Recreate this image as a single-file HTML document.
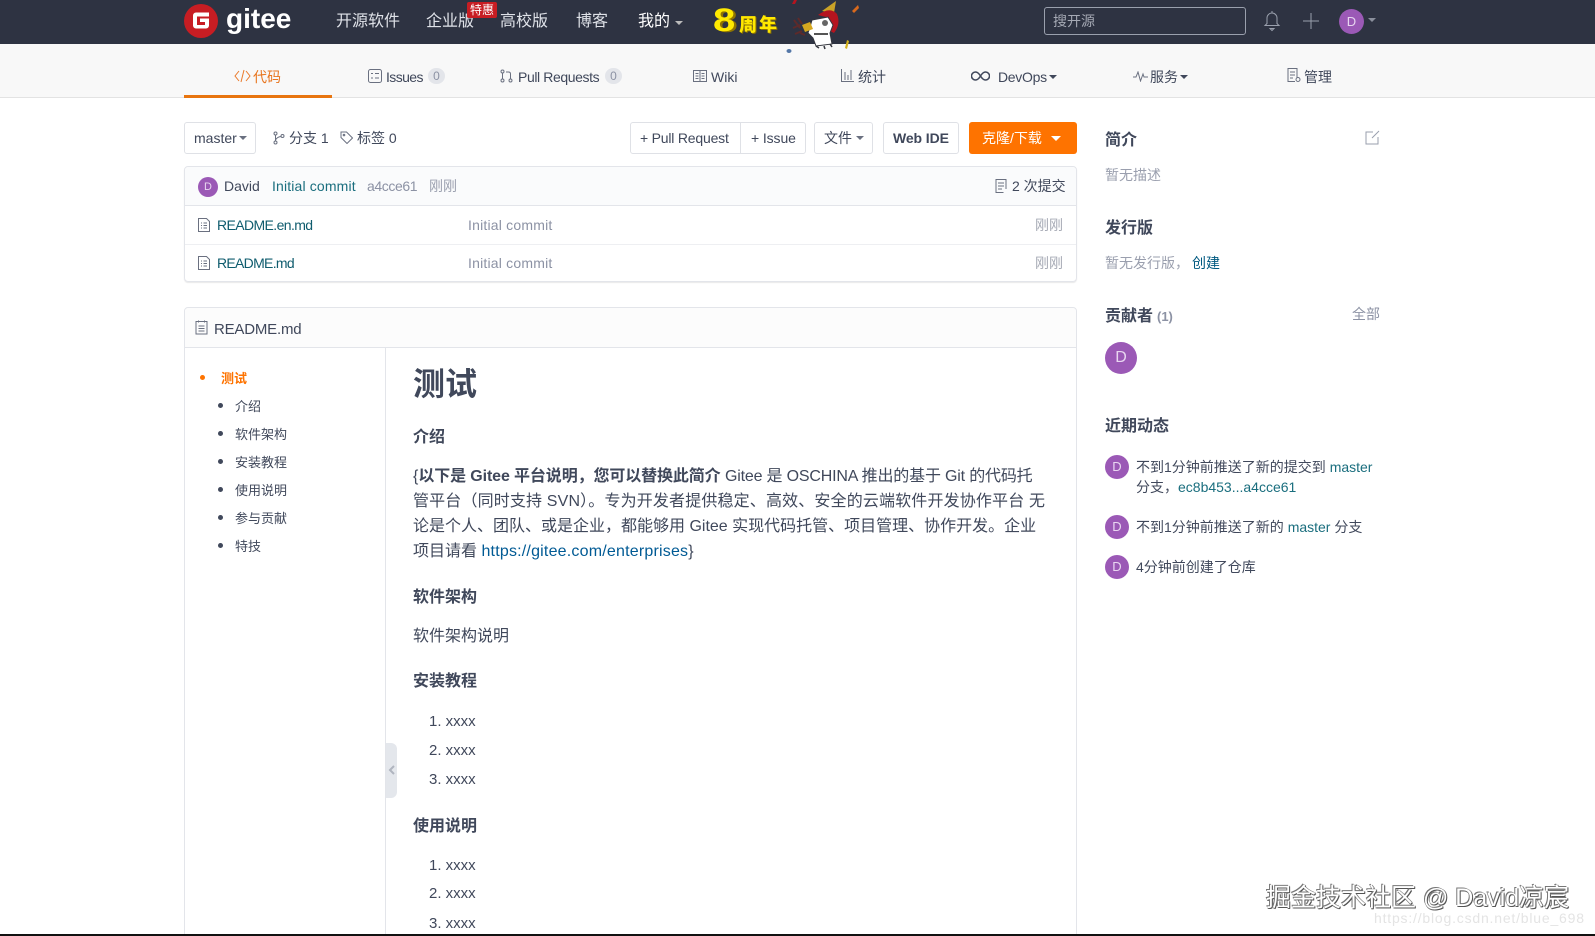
<!DOCTYPE html>
<html lang="zh"><head><meta charset="utf-8"><title>Gitee</title>
<style>
html,body{margin:0;padding:0;width:1595px;height:936px;overflow:hidden;background:#fff}
body{position:relative;font-family:"Liberation Sans","Noto Sans CJK SC",sans-serif;font-size:14px;color:#40485b}
.t,.b,svg{position:absolute}
.t{white-space:nowrap;height:20px;line-height:20px}
.b{box-sizing:border-box}
.g{color:#8c92a4}.l{color:#005980}.s{font-size:13px}.m{font-size:14px}
.btn{border:1px solid #dfe1e6;border-radius:3px;background:#fff}
.car{position:absolute;width:0;height:0;border-left:4px solid transparent;border-right:4px solid transparent;border-top:4px solid #6a7080}
svg{fill:none;stroke:#6a7080;stroke-width:1}
.nav{color:#dfe2e8;font-size:16px}
.ol{color:#40485b;font-size:15px}
.p{color:#40485b;font-size:16px}
h1,h2{margin:0;font-weight:bold}
.av{position:absolute;border-radius:50%;background:#9b59b6;color:#e8d6f0;text-align:center}
</style></head><body>

<!-- top nav -->
<div class="b" style="left:0;top:0;width:1595px;height:44px;background:#2e3342"></div>
<div class="b" style="left:0;top:44px;width:1595px;height:54px;background:#f8f8f8;border-bottom:1px solid #e3e3e3"></div>
<div class="b" style="left:184px;top:95px;width:148px;height:3px;background:#e8750f"></div>

<svg style="left:183px;top:3px;stroke:none" width="36" height="36" viewBox="0 0 36 36"><circle cx="18" cy="18" r="17" fill="#c71d23"/><path d="M10 12.500a3 3 0 0 1 3-3h13v4H14v8.500h8v-3h-5v-3.500h9v7a3 3 0 0 1-3 3H13a3 3 0 0 1-3-3z" fill="#fff"/></svg>
<div class="t" style="left:226px;top:5px;height:28px;line-height:28px;font-size:28px;font-weight:bold;color:#fff">gitee</div>

<div class="t nav" style="left:336px;top:12px">开源软件</div>
<div class="t nav" style="left:426px;top:12px">企业版</div>
<div class="b" style="left:467px;top:2px;width:30px;height:16px;background:#c71d23;border-radius:2px;color:#fff;font-size:12px;line-height:16px;text-align:center">特惠</div>
<div class="t nav" style="left:500px;top:12px">高校版</div>
<div class="t nav" style="left:576px;top:12px">博客</div>
<div class="t nav" style="left:638px;top:12px;color:#fff">我的</div>
<div class="car" style="left:675px;top:21px;border-top-color:#bbb"></div>

<!-- 8周年 -->
<div class="t" style="left:713px;top:6px;height:28px;width:24px;line-height:28px;font-size:32px;font-weight:900;color:#ffea00;text-shadow:2px 1px 0 #8f7400;transform:scaleX(1.25);transform-origin:left center">8</div>
<div class="t" style="left:739px;top:15px;font-size:18px;font-weight:900;color:#ffe800;text-shadow:1px 1px 0 #8a7000;letter-spacing:2px">周年</div>
<svg style="left:780px;top:0;stroke:none;overflow:visible" width="80" height="56" viewBox="0 0 80 56">
<path d="M56 1L42 11l12 2z" fill="#c9a227"/>
<path d="M38 15Q50 6 57 14Q61 24 54 33L50 31Q53 20 46 17z" fill="#b5141f"/>
<path d="M32 20L48 17L53 25L50 33L52 44L36 46L33 38L28 33L30 27z" fill="#fff" stroke="#33353d" stroke-width="1"/>
<circle cx="45" cy="23" r="3" fill="#666"/>
<path d="M34 33h14v2H34z" fill="#555"/>
<path d="M36 46l3 2M44 46l1 3M50 44l2 3" stroke="#33353d" stroke-width="1.500"/>
<path d="M22 25l8-3 3 7-8 3z" fill="#d5a71f"/>
<path d="M14 20l6 8M13 28l7-3M18 18l4 6M15 34l7-3M20 33l5 2" stroke="#5d2a2a" stroke-width="2"/>
<path d="M72 11l6-6 1 3-5 5z" fill="#d9691c"/>
<path d="M65 48l2-8 2 1-2 8z" fill="#d5b21c"/>
<ellipse cx="9" cy="51" rx="2.500" ry="2" fill="#5578a8"/>
<path d="M14 0l-2 4 3 0 2-4z" fill="#b5141f"/>
</svg>

<div class="b" style="left:1044px;top:7px;width:202px;height:28px;border:1px solid #9aa0ad;border-radius:3px"></div>
<div class="t" style="left:1053px;top:11px;font-size:14px;color:#a5a9b4">搜开源</div>
<svg style="left:1263px;top:10px;stroke:#9aa0ad" width="18" height="22" viewBox="0 0 18 22"><path d="M2 15.500h14l-2-2V8a5 5 0 0 0-10 0v5.500zM9 1v2M7 18.500h4l-2 2z"/></svg>
<svg style="left:1302px;top:12px;stroke:#9aa0ad" width="18" height="18" viewBox="0 0 18 18"><path d="M9 1v16M1 9h16"/></svg>
<div class="av" style="left:1339px;top:9px;width:25px;height:25px;line-height:25px;font-size:13px">D</div>
<div class="car" style="left:1368px;top:18px;border-top-color:#8a8f9c"></div>

<!-- tabs -->
<svg style="left:234px;top:69px;stroke:#ea7a2b" width="17" height="14" viewBox="0 0 17 14"><path d="M5 2L1 7l4 5M12 2l4 5-4 5M10 1L7 13"/></svg>
<div class="t" style="left:253px;top:67px;color:#e8751e">代码</div>
<svg style="left:368px;top:69px" width="14" height="14" viewBox="0 0 14 14"><rect x=".5" y=".5" width="13" height="13" rx="2"/><path d="M3 4.500h2M3 9h2M7 4.500h4M7 9h4"/></svg>
<div class="t" style="left:386px;top:67px;letter-spacing:-.6px">Issues</div>
<div class="b" style="left:428px;top:68px;width:17px;height:16px;border-radius:8px;background:#e3e5ea;color:#8c92a4;font-size:12px;line-height:16px;text-align:center">0</div>
<svg style="left:500px;top:69px" width="13" height="14" viewBox="0 0 13 14"><circle cx="2.500" cy="2.500" r="1.500"/><circle cx="2.500" cy="11.500" r="1.500"/><circle cx="10.500" cy="11.500" r="1.500"/><path d="M2.500 4v6M10.500 10V5q0-2-2-2H6"/></svg>
<div class="t" style="left:518px;top:67px;letter-spacing:-.4px">Pull Requests</div>
<div class="b" style="left:605px;top:68px;width:17px;height:16px;border-radius:8px;background:#e3e5ea;color:#8c92a4;font-size:12px;line-height:16px;text-align:center">0</div>
<svg style="left:693px;top:70px" width="14" height="12" viewBox="0 0 14 12"><rect x=".5" y=".5" width="13" height="11"/><path d="M7 .5v11M2.500 3.500h3M2.500 6h3M2.500 8.500h3M8.500 3.500h3M8.500 6h3M8.500 8.500h3"/></svg>
<div class="t" style="left:711px;top:67px">Wiki</div>
<svg style="left:841px;top:69px" width="13" height="13" viewBox="0 0 13 13"><path d="M.5 0v12.500H13M4 3v8M7 6v5M10 1v10"/></svg>
<div class="t" style="left:858px;top:67px">统计</div>
<svg style="left:971px;top:71px;stroke-width:1.500;stroke:#40485b" width="19" height="10" viewBox="0 0 19 10"><path d="M9.500 5C8 2.500 6.500 1 4.500 1a4 4 0 0 0 0 8c2 0 3.500-1.500 5-4s3-4 5-4a4 4 0 0 1 0 8c-2 0-3.500-1.500-5-4z"/></svg>
<div class="t" style="left:998px;top:67px;letter-spacing:-.3px">DevOps</div>
<div class="car" style="left:1049px;top:75px;border-top-color:#40485b"></div>
<svg style="left:1133px;top:71px" width="15" height="11" viewBox="0 0 15 11"><path d="M0 6h3l2-5 2.500 9L10 3l1 3h4"/></svg>
<div class="t" style="left:1150px;top:67px">服务</div>
<div class="car" style="left:1180px;top:75px;border-top-color:#40485b"></div>
<svg style="left:1287px;top:68px" width="14" height="15" viewBox="0 0 14 15"><path d="M10 10V.5H1v13h7M3 4h5M3 7h5M3 10h3"/><circle cx="11" cy="11.500" r="2"/></svg>
<div class="t" style="left:1304px;top:67px">管理</div>

<!-- toolbar -->
<div class="b btn" style="left:184px;top:122px;width:72px;height:32px"></div>
<div class="t" style="left:194px;top:128px">master</div>
<div class="car" style="left:239px;top:136px"></div>
<svg style="left:273px;top:131px" width="12" height="14" viewBox="0 0 12 14"><circle cx="2.500" cy="2.500" r="1.500"/><circle cx="2.500" cy="11.500" r="1.500"/><circle cx="9.500" cy="5" r="1.500"/><path d="M2.500 4v6M8 5.500Q4 6 2.500 9"/></svg>
<div class="t" style="left:289px;top:128px">分支 1</div>
<svg style="left:340px;top:131px" width="13" height="13" viewBox="0 0 13 13"><path d="M1 1h5.500l6 6-5.500 5.500-6-6z"/><circle cx="4" cy="4" r=".8"/></svg>
<div class="t" style="left:357px;top:128px">标签 0</div>

<div class="b btn" style="left:630px;top:122px;width:111px;height:32px;border-radius:3px 0 0 3px"></div>
<div class="t" style="left:640px;top:128px;letter-spacing:-.2px">+ Pull Request</div>
<div class="b btn" style="left:740px;top:122px;width:66px;height:32px;border-radius:0 3px 3px 0"></div>
<div class="t" style="left:751px;top:128px;letter-spacing:-.1px">+ Issue</div>
<div class="b btn" style="left:814px;top:122px;width:59px;height:32px"></div>
<div class="t" style="left:824px;top:128px">文件</div>
<div class="car" style="left:856px;top:136px"></div>
<div class="b btn" style="left:883px;top:122px;width:76px;height:32px"></div>
<div class="t" style="left:893px;top:128px;font-weight:bold;letter-spacing:-.1px">Web IDE</div>
<div class="b" style="left:969px;top:122px;width:108px;height:32px;background:#fe7300;border-radius:3px"></div>
<div class="t" style="left:982px;top:128px;color:#fff">克隆/下载</div>
<div class="car" style="left:1051px;top:136px;border-left-width:5px;border-right-width:5px;border-top:5px solid #fff"></div>

<!-- commit box -->
<div class="b" style="left:184px;top:166px;width:893px;height:116px;border:1px solid #e3e5ea;border-radius:4px;box-shadow:0 1px 1px #e8e8e8"></div>
<div class="b" style="left:185px;top:167px;width:891px;height:39px;background:#fafbfc;border-bottom:1px solid #e3e5ea;border-radius:4px 4px 0 0"></div>
<div class="b" style="left:185px;top:244px;width:891px;height:1px;background:#eeeff2"></div>
<div class="av" style="left:198px;top:177px;width:20px;height:20px;line-height:21px;font-size:11px">D</div>
<div class="t" style="left:224px;top:176px">David</div>
<div class="t l" style="left:272px;top:176px;color:#1a6e7e;letter-spacing:.15px">Initial commit</div>
<div class="t g" style="left:367px;top:176px;letter-spacing:-.4px">a4cce61</div>
<div class="t" style="left:429px;top:176px;color:#9a9fae">刚刚</div>
<svg style="left:995px;top:179px" width="12" height="14" viewBox="0 0 12 14"><path d="M11 10V.5H1v13h7.500M3 4h6M3 7h6M3 10h4"/></svg>
<div class="t" style="left:1012px;top:176px">2 次提交</div>

<svg style="left:198px;top:218px" width="12" height="14" viewBox="0 0 12 14"><path d="M.5.5h8l3 3v10H.5zM3 5h1M5.500 5H9M3 7.500h1M5.500 7.500H9M3 10h1M5.500 10H9"/></svg>
<div class="t" style="left:217px;top:215px;color:#0f5c6e;letter-spacing:-.6px">README.en.md</div>
<div class="t g" style="left:468px;top:215px;letter-spacing:.2px">Initial commit</div>
<div class="t" style="left:1035px;top:215px;color:#a5a9b4">刚刚</div>
<svg style="left:198px;top:256px" width="12" height="14" viewBox="0 0 12 14"><path d="M.5.5h8l3 3v10H.5zM3 5h1M5.500 5H9M3 7.500h1M5.500 7.500H9M3 10h1M5.500 10H9"/></svg>
<div class="t" style="left:217px;top:253px;color:#0f5c6e;letter-spacing:-.7px">README.md</div>
<div class="t g" style="left:468px;top:253px;letter-spacing:.2px">Initial commit</div>
<div class="t" style="left:1035px;top:253px;color:#a5a9b4">刚刚</div>

<!-- readme -->
<div class="b" style="left:184px;top:307px;width:893px;height:640px;border:1px solid #e3e5ea;border-radius:4px"></div>
<div class="b" style="left:185px;top:308px;width:891px;height:40px;background:#fcfcfc;border-bottom:1px solid #e3e5ea;border-radius:4px 4px 0 0"></div>
<svg style="left:195px;top:320px" width="13" height="16" viewBox="0 0 13 16"><path d="M1 1.500h11v12.500H1zM3.500.5v2M9.500.5v2M3.500 6h6M3.500 8.500h6M3.500 11h6"/></svg>
<div class="t" style="left:214px;top:320px;font-size:15px;letter-spacing:-.2px">README.md</div>
<div class="b" style="left:385px;top:348px;width:1px;height:590px;background:#e3e5ea"></div>
<div class="b" style="left:386px;top:743px;width:11px;height:55px;background:#e4e7ec;border-radius:0 6px 6px 0"></div>
<svg style="left:388px;top:765px;stroke:#b0b5bf;stroke-width:2" width="7" height="10" viewBox="0 0 7 10"><path d="M6 1L2 5l4 4"/></svg>

<div class="b" style="left:200px;top:375px;width:5px;height:5px;border-radius:50%;background:#fe7300"></div>
<div class="t s" style="left:221px;top:369px;color:#fe7300;font-weight:bold">测试</div>
<div class="b" style="left:218px;top:403px;width:5px;height:5px;border-radius:50%;background:#40485b"></div>
<div class="t s" style="left:235px;top:397px">介绍</div>
<div class="b" style="left:218px;top:431px;width:5px;height:5px;border-radius:50%;background:#40485b"></div>
<div class="t s" style="left:235px;top:425px">软件架构</div>
<div class="b" style="left:218px;top:459px;width:5px;height:5px;border-radius:50%;background:#40485b"></div>
<div class="t s" style="left:235px;top:453px">安装教程</div>
<div class="b" style="left:218px;top:487px;width:5px;height:5px;border-radius:50%;background:#40485b"></div>
<div class="t s" style="left:235px;top:481px">使用说明</div>
<div class="b" style="left:218px;top:515px;width:5px;height:5px;border-radius:50%;background:#40485b"></div>
<div class="t s" style="left:235px;top:509px">参与贡献</div>
<div class="b" style="left:218px;top:543px;width:5px;height:5px;border-radius:50%;background:#40485b"></div>
<div class="t s" style="left:235px;top:537px">特技</div>

<h1 class="t" style="left:413px;top:364px;height:40px;line-height:40px;font-size:32px">测试</h1>
<h2 class="t" style="left:413px;top:428px;font-size:16px">介绍</h2>
<div class="t p" style="left:413px;top:467px">{<b style="letter-spacing:-.12px">以下是 Gitee 平台说明，您可以替换此简介</b> <span style="letter-spacing:-.18px">Gitee 是 OSCHINA 推出的基于 Git 的代码托</span></div>
<div class="t p" style="left:413px;top:492px;letter-spacing:.15px">管平台（同时支持 SVN）。专为开发者提供稳定、高效、安全的云端软件开发协作平台 无</div>
<div class="t p" style="left:413px;top:517px">论是个人、团队、或是企业，都能够用 Gitee 实现代码托管、项目管理、协作开发。企业</div>
<div class="t p" style="left:413px;top:542px">项目请看 <span style="color:#005a94;letter-spacing:.2px">https://gitee.com/enterprises</span>}</div>
<h2 class="t" style="left:413px;top:588px;font-size:16px">软件架构</h2>
<div class="t p" style="left:413px;top:627px">软件架构说明</div>
<h2 class="t" style="left:413px;top:672px;font-size:16px">安装教程</h2>
<div class="t ol" style="left:429px;top:712px">1. xxxx</div>
<div class="t ol" style="left:429px;top:741px">2. xxxx</div>
<div class="t ol" style="left:429px;top:770px">3. xxxx</div>
<h2 class="t" style="left:413px;top:817px;font-size:16px">使用说明</h2>
<div class="t ol" style="left:429px;top:856px">1. xxxx</div>
<div class="t ol" style="left:429px;top:884px">2. xxxx</div>
<div class="t ol" style="left:429px;top:914px">3. xxxx</div>

<!-- right sidebar -->
<h2 class="t" style="left:1105px;top:131px;font-size:16px">简介</h2>
<svg style="left:1365px;top:130px;stroke:#9a9fae" width="15" height="15" viewBox="0 0 15 15"><path d="M8 2H1v12h12V7M7 8l7-7"/></svg>
<div class="t m" style="left:1105px;top:165px;color:#9a9fae">暂无描述</div>
<h2 class="t" style="left:1105px;top:219px;font-size:16px">发行版</h2>
<div class="t m" style="left:1105px;top:253px;color:#9a9fae">暂无发行版，</div>
<div class="t m" style="left:1192px;top:253px;color:#005980">创建</div>
<h2 class="t" style="left:1105px;top:307px;font-size:16px">贡献者</h2>
<div class="t s" style="left:1157px;top:307px;color:#8c92a4;font-weight:bold">(1)</div>
<div class="t m" style="left:1352px;top:304px;color:#8c92a4">全部</div>
<div class="av" style="left:1105px;top:342px;width:32px;height:32px;line-height:32px;font-size:16px">D</div>
<h2 class="t" style="left:1105px;top:417px;font-size:16px">近期动态</h2>
<div class="av" style="left:1105px;top:455px;width:24px;height:24px;line-height:24px;font-size:13px">D</div>
<div class="t m" style="left:1136px;top:457px">不到1分钟前推送了新的提交到 <span style="color:#1a6e7e">master</span></div>
<div class="t m" style="left:1136px;top:477px">分支，<span style="color:#1a6e7e">ec8b453...a4cce61</span></div>
<div class="av" style="left:1105px;top:515px;width:24px;height:24px;line-height:24px;font-size:13px">D</div>
<div class="t m" style="left:1136px;top:517px">不到1分钟前推送了新的 <span style="color:#1a6e7e">master</span> 分支</div>
<div class="av" style="left:1105px;top:555px;width:24px;height:24px;line-height:24px;font-size:13px">D</div>
<div class="t m" style="left:1136px;top:557px">4分钟前创建了仓库</div>

<!-- watermarks -->
<div class="t" style="left:1266px;top:885px;height:26px;line-height:26px;font-size:25px;color:#fff;text-shadow:-1px -1px 0 #777,1px 1px 0 #555,1px 0 0 #888,0 1px 0 #777">掘金技术社区 @ David凉宸</div>
<div class="t" style="left:1374px;top:908px;font-size:14px;color:#e4e4e4;letter-spacing:.8px">https://blog.csdn.net/blue_698</div>
<div class="b" style="left:0;top:934px;width:1595px;height:2px;background:#111"></div>
</body></html>
